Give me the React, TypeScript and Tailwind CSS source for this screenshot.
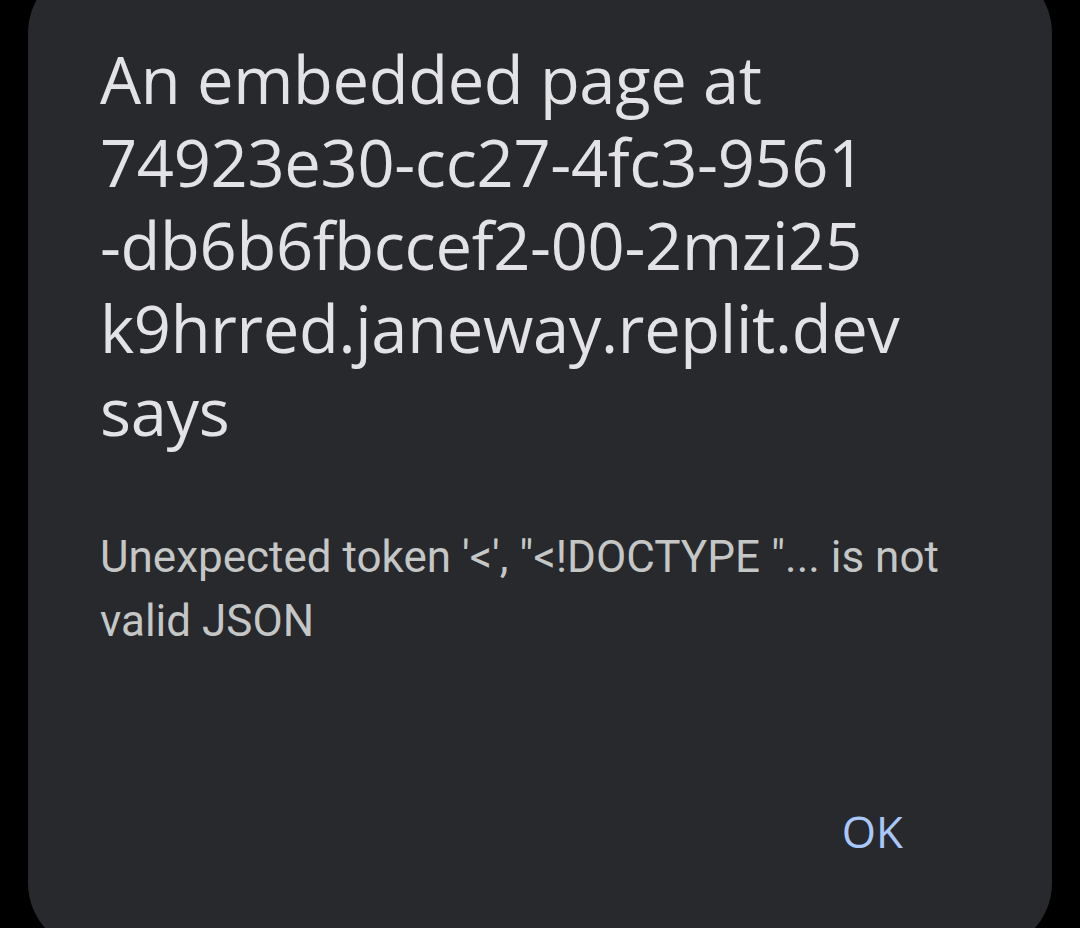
import React from "react";

export default function App() {
  return (
    <div className="h-[928px] w-[1080px] overflow-hidden bg-black">
      <div className="mx-[28px] -mt-[35px] h-[986px] rounded-[68px] bg-[#28292d] pl-[72px] pr-[72px] pt-[73px]">
        <div
          className="text-[65px] leading-[83px] tracking-[-0.3px] text-[#e3e3e6]"
          style={{ fontFamily: '"Open Sans", sans-serif' }}
        >
          <div>An embedded page at</div>
          <div>74923e30-cc27-4fc3-9561</div>
          <div>-db6b6fbccef2-00-2mzi25</div>
          <div>k9hrred.janeway.replit.dev</div>
          <div>says</div>
        </div>
        <div
          className="mt-[72px] text-[44px] leading-[64px] text-[#c4c7c5]"
          style={{ fontFamily: "Roboto, sans-serif" }}
        >
          Unexpected token '&lt;', "&lt;!DOCTYPE "... is not valid JSON
        </div>
        <div className="mt-[148px] flex justify-end pr-[77px]">
          <span
            className="text-[44px] leading-[60px] text-[#a8c7fa]"
            style={{ fontFamily: '"Open Sans", sans-serif' }}
          >
            OK
          </span>
        </div>
      </div>
    </div>
  );
}
